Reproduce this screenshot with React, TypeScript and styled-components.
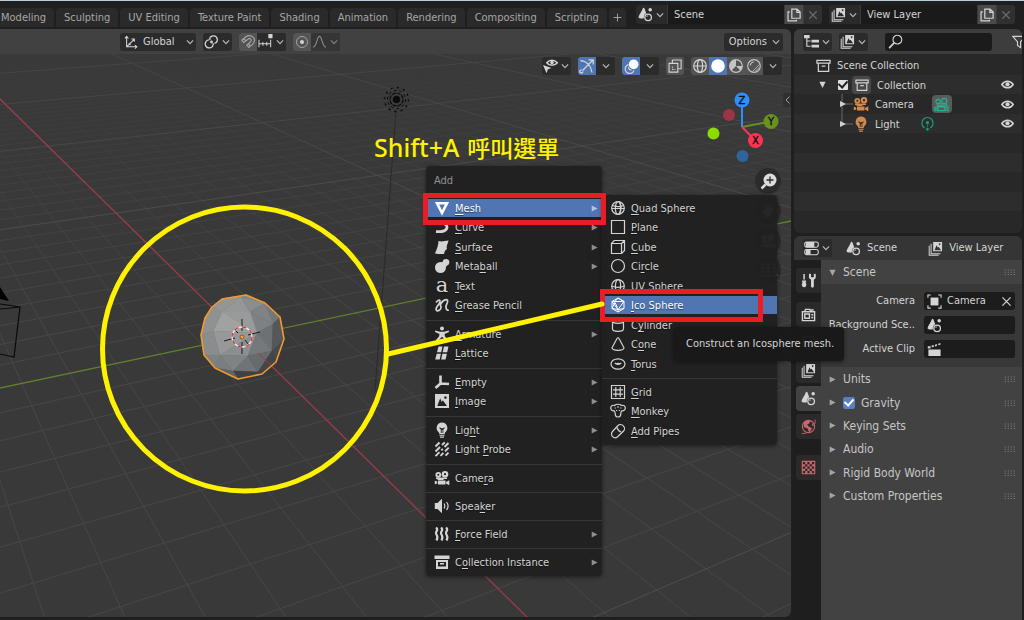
import React from "react";
import styled, { createGlobalStyle, css } from "styled-components";

const GlobalStyle = createGlobalStyle`
  * { box-sizing: border-box; }
  body {
    margin: 0;
    background: #1f1f1f;
    color: #d4d4d4;
    font: 11px/18px "DejaVu Sans Condensed", "DejaVu Sans", sans-serif;
  }
  button, input, select {
    font: inherit;
    color: inherit;
    margin: 0;
    padding: 0;
    border: 0;
    background: none;
    border-radius: 0;
    outline: none;
  }
  ul { list-style: none; margin: 0; padding: 0; }
  h2, p { margin: 0; font: inherit; }
`;

/* ---------- icons (16 unit grid) ---------- */

const solid = { fill: "currentColor", stroke: "none" };

const sphereLines = (
  <>
    <circle cx="8" cy="8" r="6.3" />
    <ellipse cx="8" cy="8" rx="2.6" ry="6.3" />
  </>
);
const moviecam = (
  <>
    <circle cx="4.3" cy="4.8" r="2.9" />
    <circle cx="11" cy="4.2" r="3.3" />
    <path d="M2 7.5h11v1.600H9.500V10h-6V9H2z" />
    <path d="M4 10.500h7.500v4H4zM12 12l3.300-1.700v5L12 13.500zM.8 10.800l2.400.8v1.800l-2.400.8z" />
  </>
);
const picture = (
  <path
    fillRule="evenodd"
    d="M1 1h14v14H1zM3.300 13h9.700L8.800 7.300 7.600 9 6.200 5.200zM11.400 3.200a1.300 1.300 0 1 0 .1 0z"
  />
);

const icons: Record<string, React.ReactNode> = {
  mesh: <path d="M3 3.200h10L8 13z" strokeWidth="2.6" />,
  curve: <path d="M2 12.500c7 .8 11-1 11-4.500C13 5 10 4 6 4.500" strokeWidth="2.8" />,
  surface: <path {...solid} d="M4.500 2c3 .8 6 .2 10-.5-.3 3-2.500 5-1.500 8.500-1.500 1.200-2.500 2-3 5-3 .3-6 0-9-.5 1-3 3-5.500 3.500-12.500z" />,
  metaball: (
    <g {...solid}>
      <circle cx="6.500" cy="9.500" r="5.500" />
      <circle cx="12" cy="4.200" r="3.300" />
      <path d="M6.500 5L10 3l3.500 4-2.500 3z" />
    </g>
  ),
  text: (
    <text x="8" y="14" textAnchor="middle" fontSize="21" fontFamily="DejaVu Serif, serif" {...solid}>
      a
    </text>
  ),
  grease: (
    <path d="M2 5.500C5 1.500 7 3 5.500 6S1 11 2.300 13s5.200-.5 4.700-3-1.500-.5 0-3.500 5.500-5 6.500-3-2 4-1.500 7 2 3 2.800 2.300" strokeWidth="1.700" />
  ),
  armature: (
    <g {...solid}>
      <circle cx="8" cy="2.600" r="2" />
      <path d="M1.200 4.600L6 5.800h4l4.800-1.200.2 1.500-4.500 2 .5 2.400 3.200 3.400-1.800 1.500L8.300 11h-.6l-4 4.400-1.800-1.500L5 10.500l.5-2.400-4.500-2z" />
    </g>
  ),
  lattice: (
    <g {...solid}>
      <path d="M4.500 1.500h4L7.200 7.300H3zM10 1.500h4.500l-1.300 5.800H8.700zM2.700 8.800h4.200L5.700 14.500H1.200zM8.400 8.800h4.500l-1.300 5.700H7.100z" />
    </g>
  ),
  empty: (
    <g strokeWidth="2.600">
      <path d="M6.500 1.500V10M6.500 9.500L15 10M6.500 9.500L1.500 14" />
    </g>
  ),
  image: <g {...solid}>{picture}</g>,
  light: (
    <g {...solid}>
      <path
        fillRule="evenodd"
        d="M8 .5a5.400 5.400 0 0 1 3.200 9.700L10.600 12H5.400l-.6-1.800A5.400 5.400 0 0 1 8 .5zM5.600 5v1.600l1.200 1V11h.9V8h.8v3h.8V7.600l1.200-1V5l-1.300 1.200h-2z"
      />
      <path d="M5.400 12.800h5.200v1H5.400zM6 14.600h4v1.100H6z" />
    </g>
  ),
  probe: (
    <g strokeWidth="1.900">
      <path d="M1.500 5.500l4-4M1.500 10.500L6 6M8 4l2.700-2.700M1.500 15.200l4-4M7.300 9.400l1.500-1.500M10.500 6l4-4M6.500 14.800l3-3M11 10.300l3.700-3.700M11.500 14.700l3-3" />
    </g>
  ),
  moviecam: (
    <g {...solid}>
      {moviecam}
      <g fill="#262626">
        <circle cx="4.300" cy="4.800" r="1" />
        <circle cx="11" cy="4.200" r="1.100" />
      </g>
    </g>
  ),
  speaker: (
    <>
      <path {...solid} d="M.8 5h2.700L8 .8v14.400L3.500 11H.8z" />
      <path d="M10 5.500c1 1.500 1 3.500 0 5M12.500 4c2 2.500 2 5.500 0 8" />
    </>
  ),
  force: (
    <path
      d="M2 1.500c3 2.500 0 3 0 5.500s3 2.500.5 7.500M7 1.500c3 2.500 0 3 0 5.500s3 2.500.5 7.500M12 1.500c3 2.500 0 3 0 5.500s3 2.500.5 7.500"
      strokeWidth="2.200"
    />
  ),
  collectionSolid: (
    <path {...solid} fillRule="evenodd" d="M.5 1.500h15V5H.5zM2 6h12v9H2zM4 8v4.500h8V8zM6 9h4v1.500H6z" />
  ),
  archive: <path d="M1 2.500h14v3H1zM2.500 5.500v8.700h11V5.500M6 8.700h4" strokeWidth="1.300" />,
  quad: (
    <>
      {sphereLines}
      <path d="M2.300 5.500c4 1.500 8 1.500 11.400 0M1.700 8.500h12.600M9.500 2c2 4 2 8 0 12" />
    </>
  ),
  plane: <path d="M1.500 1.500h13v13h-13z" />,
  cube: <path d="M1.500 4.500h10v10h-10zM1.500 4.500l2.700-3h10.300v10l-3 3M11.500 4.500l3-3" />,
  circle: <circle cx="8" cy="8" r="6.500" />,
  uv: (
    <>
      {sphereLines}
      <path d="M1.700 8c4 1.700 8.500 1.700 12.600 0" />
    </>
  ),
  ico: <path d="M8 1l6 3.500v7L8 15l-6-3.500v-7zM2 4.500h12M14 4.500L8 12.500 2 4.500M2 11.500l6 1 6-1M2 11.500l3-6 2.500 5M8 1L5 4.500M8 1l6 3.500M8 12.500V15" strokeWidth="1" />,
  cylinder: <path d="M2.500 4v8c0 1.400 2.400 2.300 5.500 2.300s5.500-.9 5.500-2.300V4M2.500 4c0-1.400 2.400-2.300 5.500-2.300S13.500 2.600 13.500 4 11.100 6.300 8 6.300 2.500 5.400 2.500 4z" />,
  cone: <path d="M7 2.500L2 11.800c0 1.500 2.500 2.500 6 2.500s6-1 6-2.500L9 2.500C8.500 1.500 7.500 1.500 7 2.500z" />,
  torus: (
    <>
      <ellipse cx="8" cy="8" rx="7" ry="5.200" />
      <path d="M4.800 6.800c1.500 2 5 2 6.400 0M6 8c1-.7 3-.7 4 0" />
    </>
  ),
  grid: <path d="M1.500 1.500h13v13h-13zM5.800 3v10M10.200 3v10M3 5.800h10M3 10.200h10" />,
  monkey: (
    <>
      <path d="M4.500 2.500C6 .8 10 .8 11.500 2.500c2-.8 3.800.5 3.800 2.500s-1.800 3.300-3.600 2.800c-1.200 1.200-.7 3-1.200 4.700-.5 2-4.500 2-5 0-.5-1.700 0-3.500-1.200-4.700C2.500 8.300.7 7 .7 5s1.800-3.300 3.800-2.500z" />
      <path d="M4.500 5h1.300M7 4h2M10.200 5h1.300M6 7.500h1.200M8.800 7.500H10" />
    </>
  ),
  pipe: (
    <>
      <path d="M2.500 8.500l5.500-6c1.500-1.500 4-1 5.300.3s1.800 3.700.3 5.200l-6 5.800c-1.500 1.300-3.700 1-5-.2s-1.500-3.600-.1-5.100z" />
      <path d="M7 4.500c.5 2 2 3.800 4.200 4.500" />
    </>
  ),
  scene: (
    <>
      <path {...solid} d="M6 .8c.5 0 .7.3.8.6l2 5.300C7 7.700 6 9.500 6.300 12c-3 .8-5.300 0-5.800-1.200C1.500 7.500 4.500 4 5.200 1.400c.1-.4.4-.6.8-.6z" />
      <circle cx="13" cy="3" r="1.900" {...solid} />
      <circle cx="10.800" cy="11" r="3.500" strokeWidth="1.400" />
      <path d="M9.200 10.500c.2-.8.8-1.200 1.600-1.200" strokeWidth=".8" />
    </>
  ),
  viewlayer: (
    <>
      <path {...solid} fillRule="evenodd" d="M5.500 1H15v10H5.500zM7 9.800h7L11.200 6l-.8 1-1.400-2.600zM12.400 2.400a.9.9 0 1 0 .1 0z" />
      <path d="M3.300 3v10.500h10M1.300 5v10.300h10" strokeWidth="1.100" />
    </>
  ),
  copy: <path d="M5.500 1.200h6L15 4.700v7H5.500zM11.300 1.500V5H15M3.200 4.500H1.200v10.300h9.500v-1.500" strokeWidth="1.400" />,
  close: <path d="M3 3l10 10M13 3L3 13" strokeWidth="1.500" />,
  chevron: <path d="M3 5.500L8 10.700l5-5.200" strokeWidth="2" />,
  axes: <path d="M3 2v11.500h11.500M1 4l2-2.500L5 4M12.500 11.500l2.200 2-2.200 2M3 13.500l8.500-8.500M8.500 4.500h3.300v3.300M5.500 9.500l2 2" strokeWidth="1.200" />,
  pivot: (
    <>
      <path d="M6.200 6.500a4 4 0 1 1 5 3.400M9.800 9.800a4.300 4.300 0 1 1-4.600-3.500" strokeWidth="1.400" />
      <circle cx="8" cy="8.500" r="1.500" {...solid} />
    </>
  ),
  magnet: <path d="M1.800 6.200L6 2.800c3-2.500 8-.8 8.500 3 .2 2-.7 3.400-2 4.500L8.700 13.500 6.800 11l3.700-3.200c1.500-1.400.3-3.500-1.500-3.200L3.600 8.500zM3.800 4.500l2 2.600M8.300 9.700l2 2.600" strokeWidth="1.100" />,
  snap: (
    <>
      <path d="M1 6v8M13.500 6v8M1 10.500h12.500M5.200 8.500v4M9.400 8.500v4" strokeWidth="1.100" />
      <path {...solid} d="M11 0h4.500v4.500H11z" />
    </>
  ),
  proportional: (
    <>
      <circle cx="8" cy="8" r="6.300" strokeWidth=".7" />
      <circle cx="8" cy="8" r="2.300" {...solid} />
    </>
  ),
  falloff: <path d="M1 14c4.500 0 4-11.500 7-11.500S10.500 14 15 14" strokeWidth="1.200" />,
  visibility: (
    <>
      <path d="M4 4C7 .3 12 .3 15.300 4c-3.300 3.700-8.300 3.700-11.300 0z" strokeWidth="1.600" />
      <circle cx="9.600" cy="3.800" r="1.900" {...solid} />
      <path {...solid} d="M0 6.500l9 3.200-3.700 1.300-1.500 4.300z" />
    </>
  ),
  gizmo: <path d="M1.500 2.500c6 .5 10.500 5 11.500 12M3.500 12.500L13.500 2.500M9.500 1.800h4.700v4.700M2.500 12a1.500 1.500 0 1 0 1.300 1.300" strokeWidth="1.300" />,
  overlay: (
    <>
      <circle cx="10.300" cy="5.700" r="5.200" fill="#ffffff" stroke="none" />
      <path d="M4.800 6a4.800 4.800 0 1 0 5.800 6.200" strokeWidth="1.300" />
      <path d="M5 8.500c-.5 2 1 3.500 3 3" strokeWidth="1.200" />
    </>
  ),
  xray: (
    <>
      <path d="M5 1.200h10v10h-3M1.200 5h10v10h-10zM5 1.200V5" strokeWidth="1.300" />
      <path d="M5 8.500v3.500M5 12h3.500" strokeDasharray="1.500 1" />
    </>
  ),
  wire: (
    <>
      {sphereLines}
      <path d="M1.700 8h12.600" strokeWidth="1" />
    </>
  ),
  solidShade: <circle cx="8" cy="8" r="6.800" {...solid} />,
  material: (
    <>
      <circle cx="8" cy="8" r="6.300" />
      <path {...solid} d="M8 8V1.700A6.300 6.300 0 0 0 3.500 12.500zM8 8h6.300a6.300 6.300 0 0 1-1.800 4.500z" />
    </>
  ),
  rendered: (
    <>
      <circle cx="8" cy="8" r="6.300" />
      <path d="M4.300 7.500a3.800 3.800 0 0 1 3.500-3.500" />
      <path d="M6.500 13.500l7-7M9.500 13l3.500-3.500" strokeWidth=".8" />
    </>
  ),
  outliner: (
    <>
      <path {...solid} d="M0 1h6v3.500H0zM8 6h8v3H8zM8 11.500h8v3H8z" />
      <path d="M3 4v9h4M3 7.500h4" />
    </>
  ),
  search: (
    <>
      <circle cx="10" cy="6" r="4.700" strokeWidth="1.200" />
      <path d="M6.500 9.500L1.200 15" strokeWidth="1.800" />
    </>
  ),
  filter: <path d="M1 1.500h14L9.800 8v6.500L6.300 12V8z" strokeWidth="1.300" />,
  eye: (
    <>
      <path d="M1 8c3.500-5.500 10.500-5.500 14 0-3.500 5.500-10.500 5.500-14 0z" strokeWidth="1.900" />
      <circle cx="8" cy="7.700" r="2.600" {...solid} />
    </>
  ),
  camOutline: (
    <>
      <circle cx="4.300" cy="4.800" r="2.300" />
      <circle cx="11" cy="4.200" r="2.700" />
      <path d="M2.500 7.300h11v2h-11M4 10.500h7.500v4H4zM12 12l3-1.500v4.300L12 13.300M1 11l2.500 1v1.500L1 14.500z" />
    </>
  ),
  lightOutline: (
    <>
      <path d="M5 12.800a6 6 0 1 1 6 0M6.500 13.500L8 15l1.500-1.500" strokeWidth="1.300" />
      <path d="M8 7.500v7" strokeDasharray="1.500 1" />
      <circle cx="8" cy="7" r="1.700" {...solid} />
    </>
  ),
  properties: (
    <>
      <rect x=".8" y="1" width="14.400" height="5.600" rx="2" strokeWidth="1.200" />
      <rect x=".8" y="9" width="14.400" height="5.600" rx="2" strokeWidth="1.200" />
      <path {...solid} d="M2 1h9v5.600H2zM2 9h5v5.600H2z" />
    </>
  ),
  tool: (
    <g {...solid}>
      <path d="M2.500 1h1.600v6h-1.600zM1.200 8h4.200v1.500H4.800c1 1.500 1.200 3.500.3 5-1 1-2.600 1-3.600 0-.9-1.500-.7-3.500.3-5H1.200z" />
      <path d="M8.500.8v4.500l2.200 2v7.200c.3 1.500 2.700 1.500 3 0V7.300l2-2V.8l-2 .2v3.500h-3V1z" />
    </g>
  ),
  render: (
    <>
      <path d="M1.500 5h13v9.500h-13zM4 5l.8-2.500h4.700L10.500 5M4 7.500h5v4.500H4z" strokeWidth="1.500" />
      <path {...solid} d="M10.500 2.500h3V4h-3zM11 7.500h2V9h-2zM11 10.500h2V12h-2z" />
    </>
  ),
  output: <path d="M3 1.500h10v5H3zM1 7h14v5H1zM4 10h8v4.500H4z" strokeWidth="1.400" />,
  world: (
    <>
      <circle cx="8" cy="8" r="6.500" strokeWidth="1.200" />
      <path {...solid} d="M3 4c2-2.500 5-2.500 7-1.700L8.500 5l-2 .8L8 8l3.500 1.500c0 2-1.500 3-2.500 4.500-1.500-1-1-3-2-4L3 8.500zM11.500 4l2.300 3-1.800.5z" />
      <path d="M1 15.300c3 .5 4 0 5-.8M15 .7c.5 3 0 4-.8 5" strokeWidth="1" />
    </>
  ),
  texture: (
    <g {...solid}>
      <path
        fillRule="evenodd"
        d="M.8.8h14.400v14.400H.8zM2 2v2.400h2.400V2zM6.800 2v2.400h2.400V2zM11.600 2v2.400H14V2zM4.400 4.400v2.400h2.400V4.400zM9.200 4.400v2.400h2.400V4.400zM2 6.800v2.400h2.400V6.800zM6.800 6.800v2.400h2.400V6.800zM11.600 6.800v2.400H14V6.800zM4.400 9.200v2.400h2.400V9.200zM9.200 9.200v2.400h2.400V9.200zM2 11.600V14h2.400v-2.400zM6.800 11.600V14h2.400v-2.400zM11.600 11.600V14H14v-2.400z"
      />
    </g>
  ),
  object: (
    <>
      <path {...solid} d="M3.800 3.800h8.400v8.400H3.800z" />
      <path d="M1 4V1h3M12 1h3v3M15 12v3h-3M4 15H1v-3" />
    </>
  ),
  clip: <path {...solid} d="M1.500 8h13v7h-13zM.8 4.500h3V7h-3zM5 3.800l2.200-.6v2L5 5.500zM8.500 2.800l2-.6v2l-2 .5zM12 1.800l2.300-.8v2L12 3.500z" />,
  grip: (
    <path {...solid} d="M1 4.500h1.500V6H1zM5 4.500h1.500V6H5zM9 4.500h1.500V6H9zM13 4.500h1.500V6H13zM1 7.500h1.500V9H1zM5 7.500h1.500V9H5zM9 7.500h1.500V9H9zM13 7.500h1.500V9H13zM1 10.500h1.500V12H1zM5 10.500h1.500V12H5zM9 10.500h1.500V12H9zM13 10.500h1.500V12H13z" />
  ),
  right: <path {...solid} d="M3 2.500L13.500 8 3 13.500z" />,
  down: <path {...solid} d="M2.500 3h11L8 14z" />,
  plus: <path d="M8 1v14M1 8h14" strokeWidth="1.700" />,
};

const Svg = styled.svg<{ $size: number; $color?: string }>`
  display: block;
  flex: none;
  width: ${(p) => p.$size}px;
  height: ${(p) => p.$size}px;
  color: ${(p) => p.$color || "inherit"};
  overflow: visible;
`;

function Icon({ name, size = 14, color }: { name: string; size?: number; color?: string }) {
  return (
    <Svg $size={size} $color={color} viewBox="0 0 16 16" fill="none" stroke="currentColor" strokeWidth="1.200" aria-hidden="true">
      {icons[name]}
    </Svg>
  );
}

/* ---------- shell ---------- */

const Shell = styled.div`
  display: flex;
  flex-direction: column;
  min-height: 100vh;
  overflow: hidden;
  border-top: 1px solid #b9cddb;
`;

const TopBar = styled.header`
  display: flex;
  height: 28px;
  background: #1f1f1f;
`;

const WorkspaceTabs = styled.nav`
  display: flex;
  align-items: flex-end;
  gap: 2px;
  margin-left: -7px;
  padding-bottom: 2px;
`;

const WorkspaceTab = styled.button<{ $narrow?: boolean }>`
  display: flex;
  align-items: center;
  height: 19px;
  padding: 0 ${(p) => (p.$narrow ? 4 : 8)}px;
  border-radius: 4px 4px 0 0;
  background: #2a2a2a;
  color: #a6a6a6;
  white-space: nowrap;
`;

const DataBlocks = styled.div`
  display: flex;
  gap: 7px;
  margin-left: auto;
  padding: 4px 9px 4px 0;
`;

const DataBlock = styled.div`
  display: flex;
  gap: 1px;
  width: 186px;
  height: 19px;
  border-radius: 4px;
  overflow: hidden;
  background: #3a3a3a;
`;

const DataKind = styled.button`
  display: flex;
  align-items: center;
  justify-content: center;
  gap: 2px;
  width: 31px;
  background: #2a2a2a;
`;

const DataName = styled.input`
  flex: 1;
  min-width: 0;
  padding-left: 6px;
  background: #1a1a1a;
`;

const DataAction = styled.button<{ $dim?: boolean }>`
  display: flex;
  align-items: center;
  justify-content: center;
  width: 18px;
  background: ${(p) => (p.$dim ? "#303030" : "#4a4a4a")};
  color: ${(p) => (p.$dim ? "#6b6b6b" : "#d4d4d4")};
`;

const Workspace = styled.div`
  display: flex;
  flex: 1;
  gap: 3px;
  padding: 0 2px 0 0;
`;

/* ---------- 3D viewport ---------- */

const Viewport = styled.main`
  position: relative;
  z-index: 1;
  display: flex;
  flex-direction: column;
  flex: 1;
  min-width: 0;
  margin-bottom: 3px;
  border-radius: 0 6px 6px 0;
  background: #393939;
`;

const Scene = styled.svg`
  position: absolute;
  left: 0;
  top: 0;
  width: 100%;
  height: 100%;
  border-radius: 0 6px 6px 0;
`;

const HeaderBar = styled.div`
  position: relative;
  display: flex;
  align-items: center;
  gap: 7px;
  height: 25px;
  padding: 0 8px 0 120px;
  border-radius: 0 6px 0 0;
  background: #414141;
`;

const OverlayBar = styled.div`
  position: relative;
  display: flex;
  justify-content: flex-end;
  gap: 7px;
  padding: 3px 9px;
`;

const Group = styled.div`
  display: flex;
  height: 18px;
  border-radius: 3px;
  overflow: hidden;
  background: #2b2b2b;
`;

const Tool = styled.button<{ $tone?: "on" | "mid" | "off"; $wide?: number }>`
  display: flex;
  align-items: center;
  justify-content: center;
  gap: 2px;
  width: ${(p) => p.$wide || 18}px;
  color: ${(p) => (p.$tone === "off" ? "#8a8a8a" : "#d4d4d4")};
  background: ${(p) => (p.$tone === "on" ? "#4f76b3" : p.$tone === "mid" ? "#545454" : "#2b2b2b")};
  ${(p) =>
    p.$tone === "off" &&
    css`
      background: #353535;
    `}
`;

const Orientation = styled.label`
  display: flex;
  align-items: center;
  gap: 5px;
  width: 76px;
  height: 18px;
  padding: 0 1px 0 4px;
  border-radius: 3px;
  background: #2b2b2b;
`;

const PlainSelect = styled.select`
  flex: 1;
  min-width: 0;
  appearance: none;
`;

const OptionsButton = styled.button`
  display: flex;
  align-items: center;
  gap: 4px;
  height: 18px;
  margin-left: auto;
  padding: 0 2px 0 5px;
  border-radius: 3px;
  background: #2b2b2b;
`;

/* ---------- menus and annotations over the canvas ---------- */

const Caption = styled.p`
  position: absolute;
  left: 374px;
  top: 103px;
  font: 500 23px/30px "Noto Sans", "Noto Sans CJK TC", sans-serif;
  color: #fff200;
  white-space: nowrap;
`;

const CaptionKeys = styled.span`
  margin-right: 2px;
  font-size: 25px;
`;

const Menu = styled.div<{ $x: number; $y: number; $w: number }>`
  position: absolute;
  left: ${(p) => p.$x}px;
  top: ${(p) => p.$y}px;
  width: ${(p) => p.$w}px;
  padding: 4px 0;
  border-radius: 4px;
  background: rgba(32, 32, 32, 0.97);
  box-shadow: 0 1px 4px rgba(0, 0, 0, 0.5);
`;

const MenuTitle = styled.h2`
  padding: 2px 8px 9px;
  color: #919191;
`;

const MenuGroup = styled.ul`
  display: grid;
  grid-auto-rows: 19px 20px;

  & + & {
    margin-top: 4px;
    border-top: 1px solid #373737;
    padding-top: 4px;
  }
`;

const MenuItem = styled.button<{ $active?: boolean }>`
  display: flex;
  align-items: center;
  gap: 5px;
  width: 100%;
  height: 18px;
  padding: 0 3px 0 8px;
  text-align: left;
  white-space: nowrap;
  background: ${(p) => (p.$active ? "#4f76b3" : "transparent")};
  color: ${(p) => (p.$active ? "#fff" : "#d4d4d4")};
  text-shadow: 0 1px 1px rgba(0, 0, 0, 0.5);

  u {
    text-underline-offset: 2px;
    text-decoration-skip-ink: none;
  }
`;

const ItemLabel = styled.span`
  flex: 1;
  padding-top: 2px;
`;

const Tooltip = styled.div`
  position: absolute;
  left: 674px;
  top: 298px;
  padding: 8px 10px 8px 12px;
  border-radius: 4px;
  background: rgba(25, 25, 25, 0.97);
  box-shadow: 0 1px 4px rgba(0, 0, 0, 0.5);
  white-space: nowrap;
`;

const Highlight = styled.div<{ $x: number; $y: number; $w: number; $h: number }>`
  position: absolute;
  left: ${(p) => p.$x}px;
  top: ${(p) => p.$y}px;
  width: ${(p) => p.$w}px;
  height: ${(p) => p.$h}px;
  border: 5px solid #ed1c24;
  pointer-events: none;
`;

const Ink = styled(Scene)`
  pointer-events: none;
`;

/* ---------- right column ---------- */

const SideColumn = styled.aside`
  display: flex;
  flex-direction: column;
  gap: 3px;
  width: 228px;
  flex: none;
`;

const Editor = styled.section<{ $grow?: boolean }>`
  display: flex;
  flex-direction: column;
  border-radius: ${(p) => (p.$grow ? "6px 6px 0 0" : "6px")};
  overflow: hidden;
  background: #282828;
  ${(p) =>
    p.$grow &&
    css`
      flex: 1;
    `}
`;

const EditorHeader = styled.div<{ $plain?: boolean }>`
  display: flex;
  align-items: center;
  gap: 7px;
  height: ${(p) => (p.$plain ? 24 : 25)}px;
  padding-left: 9px;
  background: ${(p) => (p.$plain ? "#353535" : "#3d3d3d")};
  white-space: nowrap;
`;

const SearchBox = styled.label`
  display: flex;
  align-items: center;
  gap: 4px;
  flex: 1;
  height: 18px;
  margin: 0 13px 0 10px;
  padding: 0 3px;
  border-radius: 3px;
  background: #1b1b1b;
`;

const PlainInput = styled.input`
  flex: 1;
  min-width: 0;
  width: 10px;
`;

const FilterButton = styled.button`
  width: 10px;
  overflow: hidden;
`;

const Tree = styled.ul`
  display: grid;
  grid-auto-rows: 20px 19px;
  padding: 1px 0 2px;
`;

const TreeRow = styled.li<{ $indent: number }>`
  display: flex;
  align-items: center;
  padding: 0 8px 0 ${(p) => p.$indent}px;
  background: #282828;

  &:nth-child(even) {
    background: #2d2d2d;
  }
`;

const TreeName = styled.span`
  margin: 0 18px 0 6px;
  padding-top: 2px;
`;

const Chip = styled.span<{ $tone: string; $w: number }>`
  display: flex;
  align-items: center;
  justify-content: center;
  width: ${(p) => p.$w}px;
  height: 18px;
  border-radius: 4px;
  background: ${(p) => p.$tone};
`;

const EyeButton = styled.button`
  margin-left: auto;
`;

const Check = styled.input<{ $blue?: boolean }>`
  appearance: none;
  display: grid;
  place-items: center;
  width: ${(p) => (p.$blue ? 12 : 10)}px;
  height: ${(p) => (p.$blue ? 12 : 10)}px;
  border-radius: ${(p) => (p.$blue ? 2 : 1)}px;
  background: ${(p) => (p.$blue ? "#5680c2" : "#e0e0e0")};

  &::after {
    content: "";
    width: 4px;
    height: 7px;
    margin-top: -2px;
    border: solid ${(p) => (p.$blue ? "#fff" : "#222")};
    border-width: 0 2px 2px 0;
    transform: rotate(42deg);
  }
`;

const TreeCheck = styled(Check)`
  margin: 0 4px 0 11px;
`;

const PropertiesBody = styled.div`
  display: flex;
  flex: 1;
`;

const TabColumn = styled.div`
  display: flex;
  flex-direction: column;
  gap: 3px;
  width: 27px;
  padding: 8px 0 0 2px;
  background: #1e1e1e;
`;

const SideTab = styled.button<{ $active?: boolean; $gap?: number }>`
  display: flex;
  align-items: center;
  justify-content: center;
  height: 25px;
  margin-bottom: ${(p) => p.$gap || 0}px;
  border-radius: 4px 0 0 4px;
  background: ${(p) => (p.$active ? "#424242" : "#2a2a2a")};
`;

const PanelColumn = styled.div`
  flex: 1;
  background: #424242;
`;

const PanelHead = styled.div`
  display: flex;
  align-items: center;
  gap: 6px;
  height: 100%;
  padding: 0 6px 0 7px;
  font-size: 12px;
  color: #c6c6c6;
`;

const PanelTitle = styled.label`
  display: flex;
  align-items: center;
  gap: 6px;
  flex: 1;
`;

const OpenPanelHead = styled(PanelHead)`
  height: 24px;
`;

const PanelList = styled.div`
  display: grid;
  grid-auto-rows: 24px 23px 23px;
`;

const PanelBody = styled.div`
  display: grid;
  gap: 6px;
  padding: 8px 7px 9px 4px;
  background: #383838;
`;

const FieldRow = styled.label`
  display: grid;
  grid-template-columns: 1fr 91px;
  gap: 9px;
  height: 18px;
  text-align: right;
  white-space: nowrap;
`;

const FieldBox = styled.span`
  display: flex;
  align-items: center;
  gap: 5px;
  padding: 0 2px 0 3px;
  border-radius: 3px;
  background: #1c1c1c;
`;

const Crumb = styled.span<{ $first?: boolean }>`
  display: flex;
  align-items: center;
  gap: 6px;
  margin-left: ${(p) => (p.$first ? 7 : 24)}px;
`;

/* ---------- scene geometry ---------- */

const project = (a: number, b: number) => {
  const w = 1 - 0.0419 * a + 0.0197 * b;
  return [(242 + 7.65 * a + 44.48 * b) / w, (336 + 3.38 * a - 1.88 * b) / w - 29];
};

type Segment = { key: string; from: number[]; to: number[]; major: boolean };
const gridLines: Segment[] = [];
for (let b = -44; b <= 120; b++) {
  if (b === 0) continue;
  const near = (0.9 + 0.0197 * b) / 0.0419;
  gridLines.push({ key: "x" + b, from: project(-160, b), to: project(near, b), major: b % 10 === 0 });
}
for (let a = -160; a <= 24; a++) {
  if (a === 0) continue;
  const near = Math.max(-60, (-0.9 + 0.0419 * a) / 0.0197);
  const far = 200;
  if (1 - 0.0419 * a + 0.0197 * near < 0.09) continue;
  gridLines.push({ key: "y" + a, from: project(a, near), to: project(a, far), major: a % 10 === 0 });
}

const facets: [string, string][] = [
  ["222,299 246,295 241,297 222,312 212,307", "#949696"],
  ["241,297 222,312 250,312", "#969898"],
  ["241,297 265,303 250,312", "#8b8e8e"],
  ["246,295 265,303 241,297", "#858888"],
  ["265,303 280,317 273,324", "#74777a"],
  ["265,303 273,324 250,312", "#808386"],
  ["250,312 273,324 257,333", "#7e8184"],
  ["222,312 250,312 257,333", "#999b9b"],
  ["222,312 213,331 257,333", "#a0a2a2"],
  ["212,307 222,312 213,331 201,335 205,318", "#909292"],
  ["213,331 257,333 220,355", "#979999"],
  ["257,333 220,355 248,356", "#8c8f8f"],
  ["257,333 273,324 272,351", "#6e7173"],
  ["257,333 272,351 248,356", "#76797b"],
  ["273,324 280,317 284,339 272,351", "#55575a"],
  ["272,351 284,339 276,362", "#484a4c"],
  ["201,335 213,331 220,355 204,355", "#8a8c8d"],
  ["204,355 220,355 215,368", "#7f8283"],
  ["220,355 215,368 233,371", "#7a7e7f"],
  ["220,355 248,356 233,371", "#808384"],
  ["248,356 233,371 258,372", "#717476"],
  ["248,356 272,351 258,372", "#686b6d"],
  ["272,351 276,362 262,374 258,372", "#434547"],
  ["233,371 258,372 262,374 238,379", "#404143"],
  ["215,368 233,371 238,379", "#606264"],
];

const sphereOutline =
  "222,299 246,295 265,303 280,317 284,339 276,362 262,374 238,379 215,368 204,355 201,335 205,318 212,307";

function SceneDrawing() {
  return (
    <Scene aria-hidden="true">
      <defs>
        <linearGradient id="minorFade" gradientUnits="userSpaceOnUse" x1="0" y1="20" x2="0" y2="300">
          <stop offset="0" stopColor="#464646" stopOpacity="0" />
          <stop offset="0.5" stopColor="#464646" stopOpacity="0.55" />
          <stop offset="1" stopColor="#464646" />
        </linearGradient>
        <linearGradient id="majorFade" gradientUnits="userSpaceOnUse" x1="0" y1="0" x2="0" y2="200">
          <stop offset="0" stopColor="#484848" stopOpacity="0.6" />
          <stop offset="1" stopColor="#4d4d4d" />
        </linearGradient>
      </defs>
      {gridLines.map((l) => (
        <line
          key={l.key}
          x1={l.from[0]}
          y1={l.from[1]}
          x2={l.to[0]}
          y2={l.to[1]}
          stroke={l.major ? "url(#majorFade)" : "url(#minorFade)"}
        />
      ))}
      <line x1="0" y1="359" x2="791" y2="192" stroke="#5f7f2c" strokeWidth="1.300" />
      <line x1="-1" y1="69" x2="531" y2="592" stroke="#9a3c4b" strokeWidth="1.300" />
      <path d="M396 82L375 362" stroke="#2a2a2a" fill="none" />
      <g stroke="#0a0a0a" fill="none" transform="translate(396.500 70.500)">
        <circle r="3.300" fill="#0a0a0a" />
        <circle r="6.500" strokeWidth="1.200" strokeDasharray="4 1" />
        <circle r="9" strokeDasharray="3 2.600" />
        <circle r="12" strokeDasharray="2 4.280" strokeWidth="1.500" />
      </g>
      <g transform="translate(0 -29)">
        <path d="M0 287l9 14-9-2z" fill="#000" />
        <path d="M0 304l20 3-6 50-14-3M0 309l20-2" fill="none" stroke="#0a0a0a" strokeWidth="1.200" />
        {facets.map(([points, fill]) => (
          <polygon key={points} points={points} fill={fill} stroke={fill} strokeWidth=".5" />
        ))}
        <path d="M258 353l15 14" stroke="#9a3c4b" />
        <polygon points={sphereOutline} fill="none" stroke="#f09a2e" strokeWidth="1.600" strokeLinejoin="round" />
        <path d="M242 319v12M242 342v12M224 341l11-3M248 335l12-3M234 329l4 4M245 340l4 5" stroke="#1b1b1b" />
        <circle cx="242" cy="337" r="10" fill="none" stroke="#e8e8e8" strokeWidth="1.300" />
        <circle cx="242" cy="337" r="10" fill="none" stroke="#d8343c" strokeWidth="1.300" strokeDasharray="4 3.850" />
        <circle cx="242" cy="337" r="2" fill="#ff9d2e" stroke="#5a3510" strokeWidth=".6" />
      </g>
      <NavigationGizmo />
    </Scene>
  );
}

const hand =
  "M-4 1l-3-3 1-1 3 2-1-6h1.500l1 5 .5-6h1.500l.2 6 1.500-5.500 1.300.4-1 6 2-3 1.200.6-2.500 6-1.500 3h-4z";

function NavigationGizmo() {
  return (
    <g transform="translate(0 -29)">
      <path d="M742 127v-27" stroke="#2c8fff" strokeWidth="2" />
      <path d="M742 127l29-5.500" stroke="#6a911d" strokeWidth="2" />
      <path d="M742 127l13.500 13.500" stroke="#ff3352" strokeWidth="2" />
      <circle cx="729" cy="115" r="6" fill="#9b3444" />
      <circle cx="713.500" cy="133.500" r="6" fill="#8bdc00" />
      <circle cx="742.500" cy="156" r="6" fill="#30639b" />
      <circle cx="742" cy="100" r="7.500" fill="#2c8fff" />
      <circle cx="771" cy="121.500" r="7.500" fill="#6a911d" />
      <circle cx="755.500" cy="140.500" r="7.500" fill="#ff3352" />
      <g fill="#111" fontSize="10" textAnchor="middle" fontFamily="DejaVu Sans, sans-serif" stroke="#111" strokeWidth=".4">
        <text x="742" y="103.500">Z</text>
        <text x="771" y="125">Y</text>
        <text x="755.500" y="144">X</text>
      </g>
      <path d="M791 93h-5a3 3 0 0 0-3 3v8a3 3 0 0 0 3 3h5z" fill="#303030" />
      <path d="M789.500 96.500l-3.500 3.500 3.500 3.500" fill="none" stroke="#9a9a9a" />
      <g fill="#2b2b2b">
        <circle cx="768" cy="181" r="13" />
        <circle cx="768" cy="211" r="13" />
        <circle cx="768" cy="241" r="13" />
        <circle cx="768" cy="270" r="13" />
      </g>
      <circle cx="770" cy="180" r="6.500" fill="#dcdcdc" />
      <path d="M765.500 184.500l-4 4" stroke="#dcdcdc" strokeWidth="2.500" />
      <path d="M770 176.500v7M766.500 180h7" stroke="#2b2b2b" strokeWidth="1.300" />
      <path d={hand} fill="#dcdcdc" transform="translate(768 212)" />
      <g fill="#dcdcdc" transform="translate(760 233)">
        {moviecam}
      </g>
      <path d="M763 264h11l3 12h-17zM768.500 264v12M761.500 268h14M760.500 272h16" fill="none" stroke="#dcdcdc" />
    </g>
  );
}

/* ---------- menu data: the underscore precedes the shortcut letter ---------- */

type Entry = [icon: string, label: string, submenu?: boolean];

const addMenu: Entry[][] = [
  [
    ["mesh", "_Mesh", true],
    ["curve", "_Curve", true],
    ["surface", "_Surface", true],
    ["metaball", "Meta_ball", true],
    ["text", "_Text"],
    ["grease", "_Grease Pencil"],
  ],
  [
    ["armature", "_Armature", true],
    ["lattice", "_Lattice"],
  ],
  [
    ["empty", "_Empty", true],
    ["image", "_Image", true],
  ],
  [
    ["light", "Lig_ht", true],
    ["probe", "Light _Probe", true],
  ],
  [["moviecam", "Came_ra"]],
  [["speaker", "Spea_ker"]],
  [["force", "_Force Field", true]],
  [["collectionSolid", "C_ollection Instance", true]],
];

const meshMenu: Entry[][] = [
  [
    ["quad", "_Quad Sphere"],
    ["plane", "_Plane"],
    ["cube", "_Cube"],
    ["circle", "Ci_rcle"],
    ["uv", "_UV Sphere"],
    ["ico", "_Ico Sphere"],
    ["cylinder", "C_ylinder"],
    ["cone", "C_one"],
    ["torus", "_Torus"],
  ],
  [
    ["grid", "_Grid"],
    ["monkey", "_Monkey"],
    ["pipe", "_Add Pipes"],
  ],
];

function MenuGroups({ groups, active }: { groups: Entry[][]; active: string }) {
  return (
    <>
      {groups.map((group) => (
        <MenuGroup key={group[0][1]}>
          {group.map(([icon, label, submenu]) => {
            const [before, after] = label.split("_");
            return (
              <li key={label}>
                <MenuItem type="button" $active={icon === active}>
                  <Icon name={icon} size={16} />
                  <ItemLabel>
                    {before}
                    <u>{after[0]}</u>
                    {after.slice(1)}
                  </ItemLabel>
                  {submenu && <Icon name="right" size={9} color={icon === active ? "#b4c3dc" : "#8d8d8d"} />}
                </MenuItem>
              </li>
            );
          })}
        </MenuGroup>
      ))}
    </>
  );
}

/* ---------- parts ---------- */

const workspaces = [
  "Modeling",
  "Sculpting",
  "UV Editing",
  "Texture Paint",
  "Shading",
  "Animation",
  "Rendering",
  "Compositing",
  "Scripting",
];

function DataSelector({ icon, name }: { icon: string; name: string }) {
  return (
    <DataBlock>
      <DataKind type="button" aria-label={"Browse " + name}>
        <Icon name={icon} size={15} />
        <Icon name="chevron" size={10} color="#b5b5b5" />
      </DataKind>
      <DataName aria-label={name + " name"} defaultValue={name} />
      <DataAction type="button" aria-label={"New " + name}>
        <Icon name="copy" size={14} />
      </DataAction>
      <DataAction type="button" $dim aria-label={"Remove " + name}>
        <Icon name="close" size={12} />
      </DataAction>
    </DataBlock>
  );
}

function Dropdown({ icon, label, off }: { icon?: string; label: string; off?: boolean }) {
  return (
    <Tool type="button" aria-label={label} $wide={icon ? 29 : 19} $tone={off ? "off" : undefined}>
      {icon && <Icon name={icon} size={15} />}
      <Icon name="chevron" size={10} color={off ? "#7d7d7d" : "#b5b5b5"} />
    </Tool>
  );
}

function TreeBranch({ last }: { last?: boolean }) {
  return (
    <svg width="16" height="20" viewBox="0 0 16 20" aria-hidden="true">
      <path d={last ? "M5 0v10h11" : "M5 0v20M5 10h11"} fill="none" stroke="#6a6a6a" />
      <path d="M3 7l6 3-6 3z" fill="#d0d0d0" />
    </svg>
  );
}

function Outliner() {
  return (
    <Editor>
      <EditorHeader>
        <Group>
          <Dropdown icon="outliner" label="Editor type" />
        </Group>
        <Group>
          <Dropdown icon="viewlayer" label="Display mode" />
        </Group>
        <SearchBox>
          <Icon name="search" size={15} />
          <PlainInput type="search" aria-label="Filter objects" />
        </SearchBox>
        <FilterButton type="button" aria-label="Filter">
          <Icon name="filter" size={14} />
        </FilterButton>
      </EditorHeader>
      <Tree>
        <TreeRow $indent={22}>
          <Icon name="archive" size={15} />
          <TreeName>Scene Collection</TreeName>
        </TreeRow>
        <TreeRow $indent={24}>
          <Icon name="down" size={9} />
          <TreeCheck type="checkbox" defaultChecked aria-label="Collection enabled" />
          <Chip $tone="#484848" $w={19}>
            <Icon name="archive" size={14} />
          </Chip>
          <TreeName>Collection</TreeName>
          <EyeButton type="button" aria-label="Hide Collection">
            <Icon name="eye" size={13} />
          </EyeButton>
        </TreeRow>
        <TreeRow $indent={43}>
          <TreeBranch />
          <Icon name="moviecam" size={16} color="#d08a4e" />
          <TreeName>Camera</TreeName>
          <Chip $tone="#5a5a5a" $w={20}>
            <Icon name="camOutline" size={15} color="#1fb590" />
          </Chip>
          <EyeButton type="button" aria-label="Hide Camera">
            <Icon name="eye" size={13} />
          </EyeButton>
        </TreeRow>
        <TreeRow $indent={43}>
          <TreeBranch last />
          <Icon name="light" size={16} color="#d08a4e" />
          <TreeName>Light</TreeName>
          <Chip $tone="transparent" $w={20}>
            <Icon name="lightOutline" size={15} color="#1a9b7c" />
          </Chip>
          <EyeButton type="button" aria-label="Hide Light">
            <Icon name="eye" size={13} />
          </EyeButton>
        </TreeRow>
        {[0, 1, 2, 3, 4].map((n) => (
          <TreeRow key={n} $indent={0} />
        ))}
      </Tree>
    </Editor>
  );
}

function Field({ label, icon, value }: { label: string; icon: string; value?: string }) {
  return (
    <FieldRow>
      {label}
      <FieldBox>
        <Icon name={icon} size={15} />
        <PlainInput defaultValue={value} />
        {value && <Icon name="close" size={13} />}
      </FieldBox>
    </FieldRow>
  );
}

function Properties() {
  return (
    <Editor $grow>
      <EditorHeader $plain>
        <Group>
          <Dropdown icon="properties" label="Editor type" />
        </Group>
        <Crumb $first>
          <Icon name="scene" size={15} />
          Scene
        </Crumb>
        <Crumb>
          <Icon name="viewlayer" size={15} />
          View Layer
        </Crumb>
      </EditorHeader>
      <PropertiesBody>
        <TabColumn>
          <SideTab type="button" aria-label="Tool" $gap={6}>
            <Icon name="tool" size={15} />
          </SideTab>
          <SideTab type="button" aria-label="Render">
            <Icon name="render" size={15} />
          </SideTab>
          <SideTab type="button" aria-label="Output">
            <Icon name="output" size={15} />
          </SideTab>
          <SideTab type="button" aria-label="View Layer">
            <Icon name="viewlayer" size={15} />
          </SideTab>
          <SideTab type="button" aria-label="Scene" $active>
            <Icon name="scene" size={15} />
          </SideTab>
          <SideTab type="button" aria-label="World" $gap={13}>
            <Icon name="world" size={15} color="#c9656c" />
          </SideTab>
          <SideTab type="button" aria-label="Texture">
            <Icon name="texture" size={15} color="#c9656c" />
          </SideTab>
        </TabColumn>
        <PanelColumn>
          <OpenPanelHead>
            <Icon name="down" size={9} color="#a5a5a5" />
            <PanelTitle as="h2">Scene</PanelTitle>
            <Icon name="grip" size={12} color="#7c7c7c" />
          </OpenPanelHead>
          <PanelBody>
            <Field label="Camera" icon="object" value="Camera" />
            <Field label="Background Sce.." icon="scene" />
            <Field label="Active Clip" icon="clip" />
          </PanelBody>
          <PanelList>
            {["Units", "Gravity", "Keying Sets", "Audio", "Rigid Body World", "Custom Properties"].map((title) => (
              <PanelHead key={title}>
                <Icon name="right" size={9} color="#a5a5a5" />
                {title === "Gravity" ? (
                  <PanelTitle>
                    <Check type="checkbox" defaultChecked $blue />
                    {title}
                  </PanelTitle>
                ) : (
                  <PanelTitle as="h2">{title}</PanelTitle>
                )}
                <Icon name="grip" size={12} color="#7c7c7c" />
              </PanelHead>
            ))}
          </PanelList>
        </PanelColumn>
      </PropertiesBody>
    </Editor>
  );
}

export default function App() {
  return (
    <Shell>
      <GlobalStyle />
      <TopBar>
        <WorkspaceTabs>
          {workspaces.map((name) => (
            <WorkspaceTab key={name} type="button">
              {name}
            </WorkspaceTab>
          ))}
          <WorkspaceTab type="button" $narrow aria-label="Add workspace">
            <Icon name="plus" size={9} />
          </WorkspaceTab>
        </WorkspaceTabs>
        <DataBlocks>
          <DataSelector icon="scene" name="Scene" />
          <DataSelector icon="viewlayer" name="View Layer" />
        </DataBlocks>
      </TopBar>
      <Workspace>
        <Viewport>
          <SceneDrawing />
          <HeaderBar>
            <Orientation>
              <Icon name="axes" size={14} />
              <PlainSelect aria-label="Transform orientation">
                <option>Global</option>
              </PlainSelect>
              <Icon name="chevron" size={10} color="#b5b5b5" />
            </Orientation>
            <Group>
              <Dropdown icon="pivot" label="Pivot point" />
            </Group>
            <Group>
              <Tool type="button" $tone="mid" aria-label="Snap">
                <Icon name="magnet" size={16} color="#a8a8a8" />
              </Tool>
              <Dropdown icon="snap" label="Snapping" />
            </Group>
            <Group>
              <Tool type="button" $tone="mid" aria-label="Proportional editing">
                <Icon name="proportional" size={14} />
              </Tool>
              <Dropdown icon="falloff" label="Falloff" off />
            </Group>
            <OptionsButton type="button">
              Options
              <Icon name="chevron" size={10} color="#b5b5b5" />
            </OptionsButton>
          </HeaderBar>
          <OverlayBar>
            <Group>
              <Dropdown icon="visibility" label="Object visibility" />
            </Group>
            <Group>
              <Tool type="button" $tone="on" aria-label="Gizmos">
                <Icon name="gizmo" size={16} />
              </Tool>
              <Dropdown label="Gizmo settings" />
            </Group>
            <Group>
              <Tool type="button" $tone="on" aria-label="Overlays">
                <Icon name="overlay" size={15} />
              </Tool>
              <Dropdown label="Overlay settings" />
            </Group>
            <Group>
              <Tool type="button" $tone="mid" aria-label="X-ray">
                <Icon name="xray" size={14} />
              </Tool>
            </Group>
            <Group>
              <Tool type="button" $tone="mid" aria-label="Wireframe">
                <Icon name="wire" size={16} />
              </Tool>
              <Tool type="button" $tone="on" aria-label="Solid">
                <Icon name="solidShade" size={16} color="#fff" />
              </Tool>
              <Tool type="button" $tone="mid" aria-label="Material preview">
                <Icon name="material" size={16} color="#c4c4c4" />
              </Tool>
              <Tool type="button" $tone="mid" aria-label="Rendered">
                <Icon name="rendered" size={16} color="#c4c4c4" />
              </Tool>
              <Dropdown label="Shading settings" />
            </Group>
          </OverlayBar>
          <Caption>
            <CaptionKeys>Shift+A</CaptionKeys> 呼叫選單
          </Caption>
          <Menu $x={426} $y={137} $w={176}>
            <MenuTitle>Add</MenuTitle>
            <MenuGroups groups={addMenu} active="mesh" />
          </Menu>
          <Menu $x={602} $y={166} $w={175}>
            <MenuGroups groups={meshMenu} active="ico" />
          </Menu>
          <Tooltip role="tooltip">Construct an Icosphere mesh.</Tooltip>
          <Highlight $x={423} $y={164} $w={183} $h={32} />
          <Highlight $x={600} $y={260} $w={163} $h={33} />
          <Ink aria-hidden="true">
            <g fill="none" stroke="#fff200" strokeWidth="5" strokeLinecap="round">
              <circle cx="244.500" cy="320" r="142" />
              <path d="M388 325l214-50" />
            </g>
          </Ink>
        </Viewport>
        <SideColumn>
          <Outliner />
          <Properties />
        </SideColumn>
      </Workspace>
    </Shell>
  );
}
